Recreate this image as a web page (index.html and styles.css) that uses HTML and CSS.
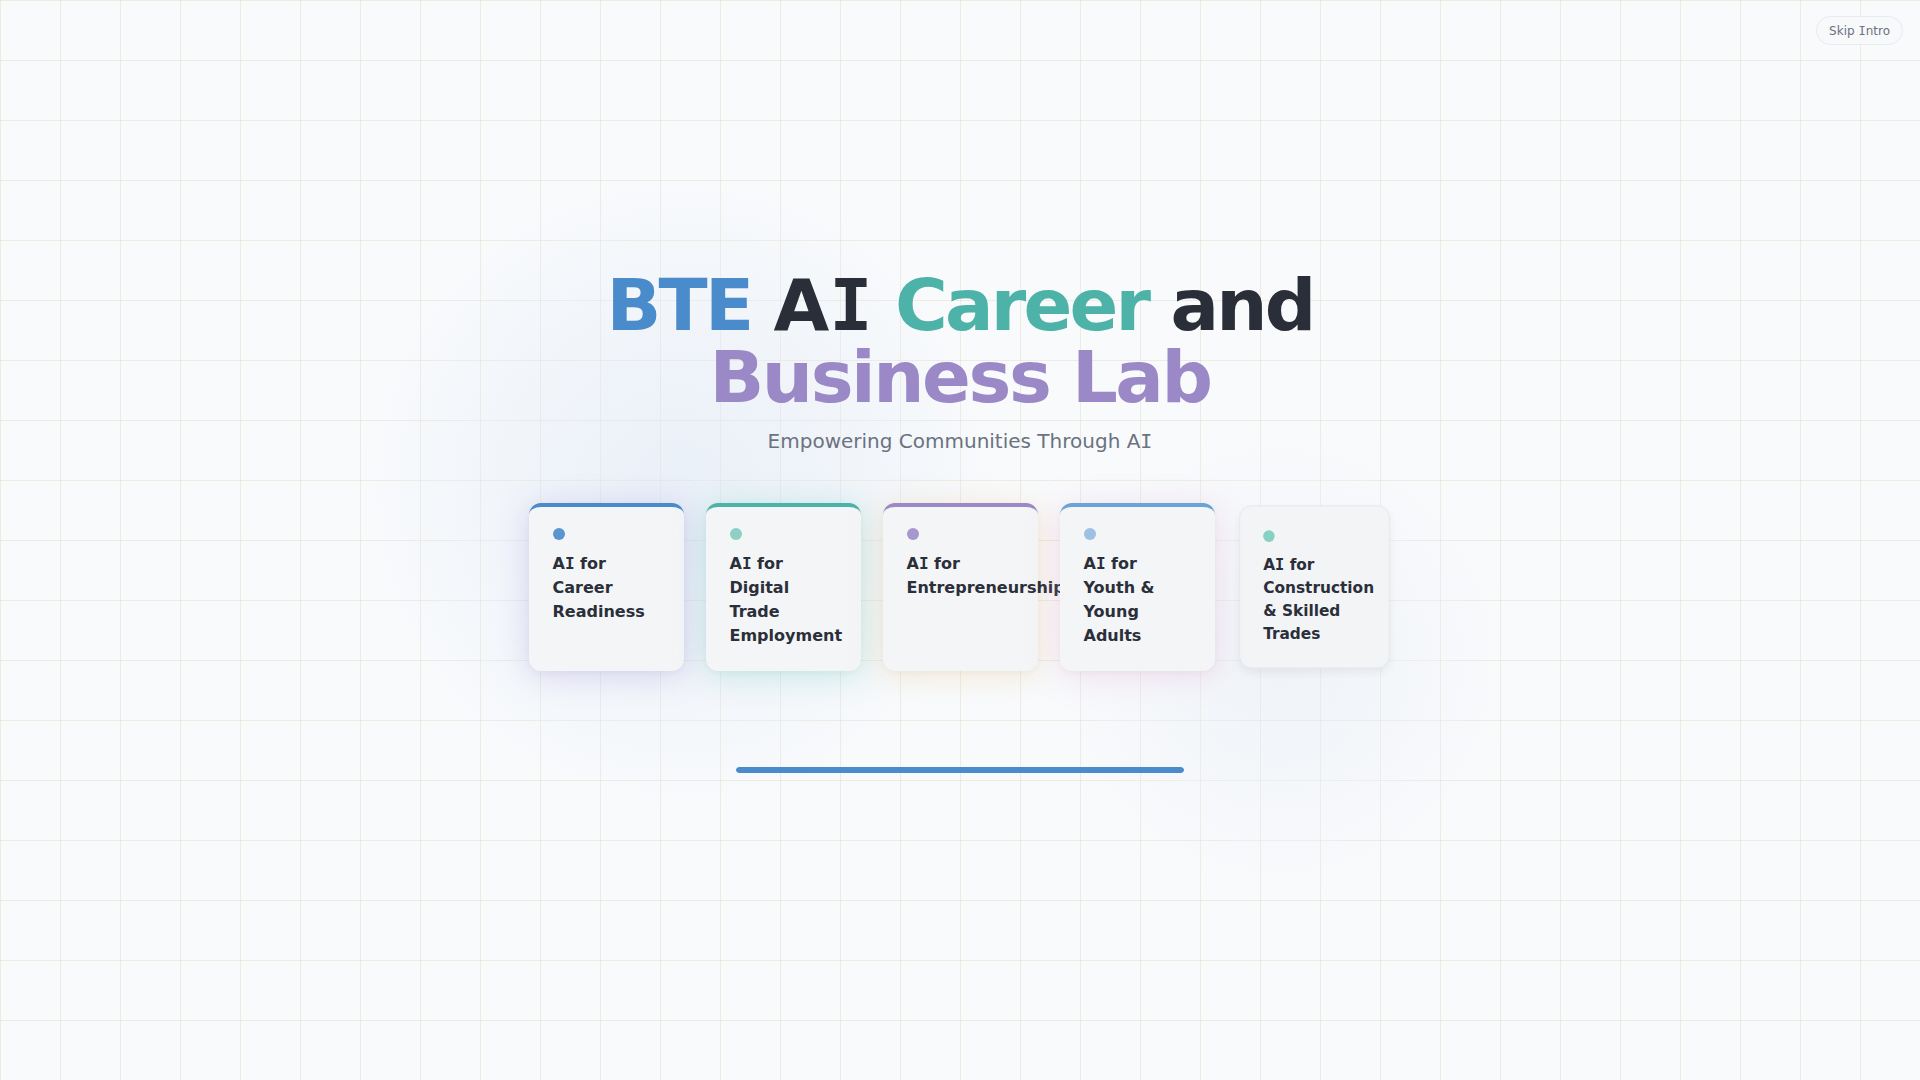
FILE: index.html
```html
<!DOCTYPE html>
<html lang="en">
<head>
<meta charset="utf-8">
<title>BTE AI Career and Business Lab</title>
<link rel="stylesheet" href="styles.css">
</head>
<body>
<div class="page">
  <div class="blob blob-a"></div>
  <div class="blob blob-b"></div>
  <button class="skip">Skip <span class="si">I</span>ntro</button>
  <main class="intro">
    <h1 class="title">
      <span class="line line-1"><span class="c-blue">BTE</span> <span class="c-dark no-ls">A<span class="si">I</span></span> <span class="c-teal">Career</span> <span class="c-dark">and</span></span>
      <span class="line c-purple">Business Lab</span>
    </h1>
    <p class="subtitle">Empowering Communities Through A<span class="si">I</span></p>
    <div class="cards">
      <div class="card card-1"><span class="dot"></span><div class="label"><span class="lead">A<span class="si">I</span> for</span><span class="rest">Career Readiness</span></div></div>
      <div class="card card-2"><span class="dot"></span><div class="label"><span class="lead">A<span class="si">I</span> for</span><span class="rest">Digital Trade Employment</span></div></div>
      <div class="card card-3"><span class="dot"></span><div class="label"><span class="lead">A<span class="si">I</span> for</span><span class="rest">Entrepreneurship</span></div></div>
      <div class="card card-4"><span class="dot"></span><div class="label"><span class="lead">A<span class="si">I</span> for</span><span class="rest">Youth &amp; Young Adults</span></div></div>
      <div class="card card-5"><span class="dot"></span><div class="label"><span class="lead">A<span class="si">I</span> for</span><span class="rest">Construction &amp; Skilled Trades</span></div></div>
    </div>
    <div class="progress"><div class="progress-fill"></div></div>
  </main>
</div>
</body>
</html>
```
FILE: styles.css
```css
* { box-sizing: border-box; }
html, body { margin: 0; padding: 0; }
body {
  font-family: "DejaVu Sans", "Noto Sans", sans-serif;
  background: #f8fafc;
  color: #2a2f3a;
  overflow: hidden;
}
.si {
  font-family: "DejaVu Sans Mono", "DejaVu Sans", monospace;
  letter-spacing: 0;
}
.page {
  position: relative;
  width: 100%;
  height: 100vh;
  background-color: #f8fafc;
  background-image:
    linear-gradient(to right, rgba(226, 218, 196, 0.45) 1px, transparent 1px),
    linear-gradient(to bottom, rgba(226, 218, 196, 0.45) 1px, transparent 1px);
  background-size: 60px 60px;
  overflow: hidden;
}
.blob {
  position: absolute;
  border-radius: 50%;
  pointer-events: none;
}
.blob-a {
  left: 360px; top: 170px; width: 640px; height: 640px;
  background: radial-gradient(circle, rgba(222, 232, 245, 0.55) 0%, rgba(230, 236, 246, 0.3) 45%, rgba(248, 250, 252, 0) 70%);
}
.blob-b {
  left: 1040px; top: 420px; width: 480px; height: 480px;
  background: radial-gradient(circle, rgba(230, 236, 244, 0.5) 0%, rgba(238, 241, 246, 0.25) 45%, rgba(248, 250, 252, 0) 70%);
}
.skip {
  position: absolute;
  top: 16px; right: 17px;
  height: 29px;
  padding: 0 12px;
  border: 1px solid #e8eaee;
  border-radius: 15px;
  background: #f8f9fb;
  color: #6b7280;
  font-family: "DejaVu Sans", sans-serif;
  font-size: 12px;
  cursor: pointer;
}
.intro {
  position: relative;
  height: 100%;
  display: flex;
  flex-direction: column;
  align-items: center;
  justify-content: center;
  padding-bottom: 38px;
}
.title {
  margin: 0;
  font-size: 72px;
  font-weight: 700;
  line-height: 1;
  letter-spacing: -0.034em;
  text-align: center;
  display: flex;
  flex-direction: column;
  align-items: center;
}
.line { display: block; height: 72px; white-space: nowrap; }
.line-1 { letter-spacing: -0.039em; }
.no-ls { letter-spacing: 0; }
.c-blue { color: #4a8bcb; }
.c-dark { color: #2a2e39; }
.c-teal { color: #4db3a8; }
.c-purple { color: #9a89c6; }
.subtitle {
  margin: 13px 0 0;
  font-size: 20px;
  line-height: 30px;
  color: #6b7280;
}
.cards {
  display: flex;
  gap: 22px;
  margin-top: 47px;
}
.card {
  width: 155px;
  padding: 21px 24px 23px;
  background: #f4f5f7;
  border-top: 4px solid #4a8bcb;
  border-radius: 12px;
  display: flex;
  flex-direction: column;
  align-items: flex-start;
}
.dot {
  width: 12px; height: 12px;
  border-radius: 50%;
  margin-bottom: 12px;
}
.label {
  font-size: 16px;
  font-weight: 700;
  line-height: 24px;
  color: #2a2f3a;
}
.lead, .rest { display: block; }
.card-1 { border-top-color: #4a8bcb; box-shadow: 0 4px 32px rgba(150, 130, 215, 0.3), 0 2px 6px rgba(0, 0, 0, 0.04); }
.card-1 .dot { background: #5b95d0; }
.card-2 { border-top-color: #4db3a8; box-shadow: 0 4px 32px rgba(90, 195, 180, 0.3), 0 2px 6px rgba(0, 0, 0, 0.04); }
.card-2 .dot { background: #8ed0c6; }
.card-3 { border-top-color: #9a89c6; box-shadow: 0 4px 32px rgba(235, 190, 120, 0.3), 0 2px 6px rgba(0, 0, 0, 0.04); }
.card-3 .dot { background: #a897cf; }
.card-4 { border-top-color: #6aa3d5; box-shadow: 0 4px 32px rgba(230, 160, 205, 0.3), 0 2px 6px rgba(0, 0, 0, 0.04); }
.card-4 .dot { background: #9dc0e3; }
.card-5 {
  border-top-color: #f3f4f6;
  background: #f3f4f6;
  outline: 1px solid #e6e8ec;
  box-shadow: 0 4px 10px rgba(0, 0, 0, 0.07);
  transform: scale(0.96);
}
.card-5 .dot { background: #86d0c4; }
.progress {
  width: 448px;
  height: 6px;
  margin-top: 96px;
  border-radius: 3px;
  overflow: hidden;
}
.progress-fill {
  width: 100%;
  height: 100%;
  background: #4a8bcb;
  border-radius: 3px;
}
```
